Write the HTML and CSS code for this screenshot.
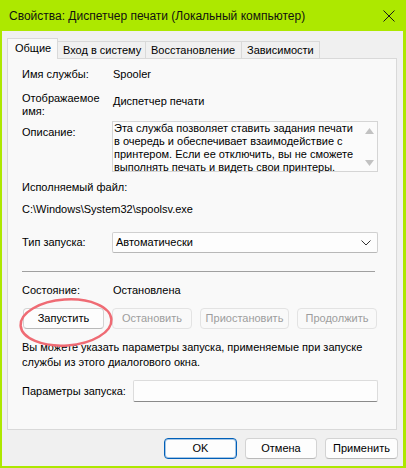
FILE: index.html
```html
<!DOCTYPE html>
<html lang="ru">
<head>
<meta charset="utf-8">
<link rel="stylesheet" href="styles.css">
</head>
<body>
<div class="window">
  <div class="titlebar">
    <span class="title">Свойства: Диспетчер печати (Локальный компьютер)</span>
    <svg class="close" width="12" height="12" viewBox="0 0 12 12"><path d="M0.5 0.5 L11.5 11.5 M11.5 0.5 L0.5 11.5" stroke="#1a1a1a" stroke-width="1"/></svg>
  </div>
  <div class="client">
    <div class="tabs">
      <div class="tab active t1">Общие</div>
      <div class="tab t2">Вход в систему</div>
      <div class="tab t3">Восстановление</div>
      <div class="tab t4">Зависимости</div>
    </div>
    <div class="panel">
      <div class="row r1"><div class="label">Имя службы:</div><div class="value">Spooler</div></div>
      <div class="row r2"><div class="label lbl2">Отображаемое<br>имя:</div><div class="value val2">Диспетчер печати</div></div>
      <div class="row r3">
        <div class="label lbl3">Описание:</div>
        <div class="desc">
          <div class="desc-text">Эта служба позволяет ставить задания печати в очередь и обеспечивает взаимодействие с принтером. Если ее отключить, вы не сможете выполнять печать и видеть свои принтеры.</div>
          <div class="scroll">
            <svg width="9" height="6" viewBox="0 0 9 6"><path d="M0 6 L4.5 0 L9 6 Z" fill="#c2c2c2"/></svg>
            <svg width="9" height="6" viewBox="0 0 9 6"><path d="M0 0 L4.5 6 L9 0 Z" fill="#c2c2c2"/></svg>
          </div>
        </div>
      </div>
      <div class="line r4">Исполняемый файл:</div>
      <div class="line r5">C:\Windows\System32\spoolsv.exe</div>
      <div class="row r6">
        <div class="label lbl6">Тип запуска:</div>
        <div class="combo"><span>Автоматически</span>
          <svg width="10" height="6" viewBox="0 0 10 6"><path d="M0.5 0.5 L5 5 L9.5 0.5" fill="none" stroke="#333" stroke-width="1"/></svg>
        </div>
      </div>
      <div class="sep"></div>
      <div class="row r7"><div class="label">Состояние:</div><div class="value">Остановлена</div></div>
      <div class="btnrow">
        <div class="btn b1">Запустить</div>
        <div class="btn disabled b2">Остановить</div>
        <div class="btn disabled b3">Приостановить</div>
        <div class="btn disabled b4">Продолжить</div>
        <svg class="mark" width="100" height="54" viewBox="0 0 100 54"><ellipse cx="49" cy="26.5" rx="45.5" ry="23" transform="rotate(-4 49 26.5)" fill="none" stroke="#ef6b74" stroke-width="2.5"/></svg>
      </div>
      <div class="note">Вы можете указать параметры запуска, применяемые при запуске службы из этого диалогового окна.</div>
      <div class="params"><div class="plabel">Параметры запуска:</div><div class="input"></div></div>
    </div>
    <div class="footer">
      <div class="btn ok">OK</div>
      <div class="btn cancel">Отмена</div>
      <div class="btn apply">Применить</div>
    </div>
  </div>
</div>
</body>
</html>
```
FILE: styles.css
```css
* { box-sizing: border-box; }
html, body { margin: 0; padding: 0; }
body {
  font-family: "Liberation Sans", Arial, sans-serif;
  font-size: 11px;
  line-height: 15px;
  color: #000;
  background: #ade800;
}
.window {
  width: 406px;
  height: 468px;
  background: #ade800;
  padding: 0 3px 2px 2px;
  display: flex;
  flex-direction: column;
}
.titlebar {
  height: 31px;
  margin: 0 -3px 0 -2px;
  display: flex;
  align-items: center;
  padding: 0 11px 0 9px;
  justify-content: space-between;
}
.title { font-size: 12px; padding-top: 1px; color: #111; }
.client {
  flex: 1;
  background: #f0f0f0;
  display: flex;
  flex-direction: column;
}
.tabs {
  display: flex;
  align-items: flex-end;
  margin-top: 7px;
  padding-left: 5px;
  height: 21px;
  margin-bottom: -1px;
  position: relative;
  z-index: 1;
}
.tab {
  height: 17px;
  margin-bottom: 1px;
  border-top: 1px solid #d9d9d9;
  border-right: 1px solid #d9d9d9;
  background: #f0f0f0;
  padding: 1px 0 0 5px;
  line-height: 15px;
  white-space: nowrap;
}
.tab.active {
  height: 21px;
  margin-bottom: 0;
  border-left: 1px solid #d9d9d9;
  background: #f9f9f9;
  padding: 2px 0 0 7px;
}
.t1 { width: 51px; }
.t2 { width: 88px; }
.t3 { width: 96px; }
.t4 { width: 78px; }
.panel {
  margin: 0 6px 0 5px;
  height: 372px;
  border: 1px solid #d9d9d9;
  background: #f9f9f9;
  padding: 0 18px 0 14px;
}
.row {
  display: grid;
  grid-template-columns: 90px 266px;
}
.value { padding-left: 1px; }
.r1 { margin-top: 8px; }
.r2 { margin-top: 10px; height: 26px; }
.lbl2 { line-height: 13px; }
.val2 { padding-top: 2px; }
.r3 { margin-top: 3px; }
.lbl3 { padding-top: 4px; }
.desc {
  height: 51px;
  border: 1px solid #d5d5d5;
  background: #fbfbfb;
  display: flex;
}
.desc-text {
  flex: 1;
  font-size: 11px;
  line-height: 13px;
  padding: 0 0 0 1px;
}
.scroll {
  width: 16px;
  display: flex;
  flex-direction: column;
  justify-content: space-between;
  align-items: center;
  padding: 6px 0 5px;
}
.scroll svg { display: block; }
.r4 { margin-top: 8px; }
.r5 { margin-top: 7px; }
.r6 { margin-top: 15px; align-items: center; }
.combo {
  height: 21px;
  background: #fdfdfd;
  border: 1px solid #d0d0d0;
  border-bottom-color: #b8b8b8;
  border-radius: 2px;
  display: flex;
  align-items: center;
  justify-content: space-between;
  padding: 0 6px 0 3px;
}
.sep {
  margin-top: 18px;
  margin-right: 3px;
  height: 1px;
  background: #a0a0a0;
}
.r7 { margin-top: 11px; }
.btnrow {
  margin-top: 10px;
  display: flex;
  gap: 8px;
  padding-left: 1px;
  position: relative;
}
.btn {
  height: 21px;
  border: 1px solid #d3d3d3;
  border-bottom-color: #b9b9b9;
  border-radius: 4px;
  background: #fdfdfd;
  display: flex;
  align-items: center;
  justify-content: center;
  font-size: 11px;
}
.btn.disabled {
  background: #f9f9f9;
  border-color: #e3e3e3;
  color: #9d9d9d;
}
.b1 { width: 81px; }
.b2 { width: 80px; }
.b3 { width: 89px; }
.b4 { width: 80px; }
.mark {
  position: absolute;
  left: -5px;
  top: -12px;
}
.note { margin-top: 11px; }
.params {
  margin-top: 10px;
  display: flex;
  align-items: center;
}
.plabel { width: 111px; }
.input {
  width: 245px;
  height: 22px;
  background: #fdfdfd;
  border: 1px solid #dcdcdc;
  border-bottom-color: #8a8a8a;
  border-radius: 2px;
}
.footer {
  margin-top: 8px;
  display: flex;
  justify-content: flex-end;
  gap: 8px;
  padding-right: 5px;
}
.ok {
  width: 73px;
  border: 1px solid #005fb8;
  box-shadow: inset 0 0 0 1px rgba(0, 95, 184, 0.35);
}
.cancel { width: 72px; }
.apply { width: 73px; }
```
